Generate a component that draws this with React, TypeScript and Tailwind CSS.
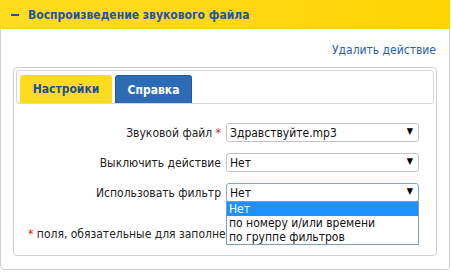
import React from "react";

const font = { fontFamily: '"DejaVu Sans Condensed", "DejaVu Sans", Verdana, sans-serif', fontStretch: "condensed" as const };

function Select({ value, focused }: { value: string; focused?: boolean }) {
  return (
    <div
      className={`relative w-[193px] h-[19px] rounded-[3px] border bg-white flex items-center pl-[3px] text-[12px] text-[#111] ${
        focused ? "border-[#7ea7dc]" : "border-[#c3c3c3]"
      }`}
    >
      <span>{value}</span>
      <span className="absolute right-[5px] top-[3px] text-[9px] text-black leading-none">▼</span>
    </div>
  );
}

export default function App() {
  return (
    <div className="w-[451px] h-[272px] bg-white" style={font}>
      <div className="w-[450px] h-[270px] border border-[#cfcfcf] rounded-b-[4px] flex flex-col">
        <div className="h-[29px] -mx-px -mt-px bg-gradient-to-r from-[#ffdc1f] to-[#ffd400] flex items-center pl-[11px] gap-[9px]">
          <div className="w-[8px] h-[2px] bg-[#1d55a6]" />
          <span className="text-[12px] font-bold text-[#1d55a6]">Воспроизведение звукового файла</span>
        </div>
        <div className="flex justify-end pr-[13px] pt-[12px] h-[38px]">
          <span className="text-[12px] text-[#2a5ea8]">Удалить действие</span>
        </div>
        <div className="mx-[12px] h-[189px] border border-[#cfcfcf] rounded-[4px] p-[2px] flex flex-col">
          <div className="h-[34px] border border-[#d6d6d6] rounded-[3px] flex items-end gap-[3px] pl-[3px]">
            <div className="h-[28px] w-[92px] bg-[#ffdb1d] rounded-t-[3px] flex items-center justify-center text-[12px] font-bold text-[#1d4f9c]">
              Настройки
            </div>
            <div className="h-[28px] w-[77px] bg-[#2c6cb6] border border-[#1f5aa0] border-b-0 rounded-t-[3px] flex items-center justify-center text-[12px] font-bold text-white">
              Справка
            </div>
          </div>
          <div className="relative flex flex-col gap-[11px] pt-[19px]">
            <div className="flex items-center">
              <div className="w-[210px] text-right text-[12px] text-[#222] pr-[5px]">
                Звуковой файл <span className="text-[#e02020]">*</span>
              </div>
              <Select value="Здравствуйте.mp3" />
            </div>
            <div className="flex items-center">
              <div className="w-[210px] text-right text-[12px] text-[#222] pr-[5px]">Выключить действие</div>
              <Select value="Нет" />
            </div>
            <div className="flex items-center relative">
              <div className="w-[210px] text-right text-[12px] text-[#222] pr-[5px]">Использовать фильтр</div>
              <Select value="Нет" focused />
              <div className="absolute left-[210px] top-[18px] w-[193px] border border-[#7f9db9] bg-white text-[12px] text-[#111] z-10">
                <div className="h-[14px] leading-[14px] bg-[#1e90ff] text-white pl-[2px]">Нет</div>
                <div className="h-[14px] leading-[14px] pl-[2px]">по номеру и/или времени</div>
                <div className="h-[14px] leading-[14px] pl-[2px]">по группе фильтров</div>
              </div>
            </div>
            <div className="pl-[12px] pt-[12px] text-[12px] text-[#222]">
              <span className="text-[#e02020]">*</span> поля, обязательные для заполнения
            </div>
          </div>
        </div>
      </div>
    </div>
  );
}
